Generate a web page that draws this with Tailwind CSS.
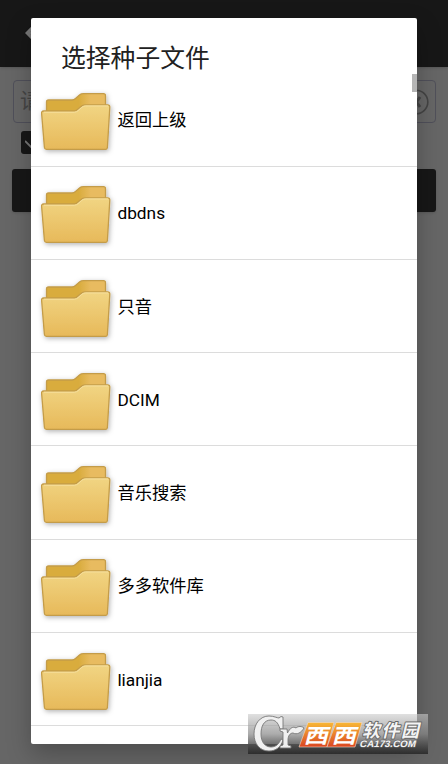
<!DOCTYPE html>
<html lang="zh">
<head>
<meta charset="UTF-8">
<title>选择种子文件</title>
<script src="https://cdn.jsdelivr.net/npm/@tailwindcss/browser@4"></script>
</head>
<body class="relative h-[764px] w-[448px] overflow-hidden bg-[#666] font-[Roboto,'Noto_Sans_CJK_SC',sans-serif]">

<!-- Page behind the dialog -->
<header class="flex h-[67px] items-center bg-[#171717] pl-[25px] shadow-sm">
    <svg class="mt-[-2px] h-3.5 w-4" viewBox="0 0 16 14" fill="none" stroke="#777" stroke-width="3"><path d="M8 1L2 7l6 6M2 7h14"/></svg>
</header>
<main class="px-3 pt-[13px]">
    <div class="ml-px flex h-[43px] w-[423px] items-center justify-between rounded border-[1.5px] border-[#50505a] pr-1.5 pl-1.5 text-[21px] text-[#454545]">
        <span>请输入</span>
        <svg class="h-[26px] w-[26px]" viewBox="0 0 26 26" fill="none" stroke="#444" stroke-width="1.6"><circle cx="13" cy="13" r="11.8"/><path d="M10 8l7 10M17 8l-7 10" stroke-width="3"/></svg>
    </div>
    <div class="mt-2 ml-[9px] flex h-[23px] w-[23px] items-center justify-center rounded-[3px] bg-[#171717]">
        <svg class="h-4 w-4" viewBox="0 0 16 16" fill="none" stroke="#777" stroke-width="1.8"><path d="M0 6l6 6 9-9"/></svg>
    </div>
    <div class="mt-[15px] h-[43px] rounded-[3px] bg-[#171717] shadow-sm"></div>
</main>

<!-- Dialog -->
<section class="absolute top-[18px] left-[31px] h-[726px] w-[386px] overflow-hidden rounded-[2px] bg-white" id="dialog">
    <h1 class="h-[55.3px] pt-[22px] pl-[30px] text-[24.8px] leading-[38px] text-[#212121]">选择种子文件</h1>
    <ul id="list"></ul>
</section>
<div class="pointer-events-none absolute top-[18px] left-[31px] h-[726px] w-[386px] rounded-[2px] shadow-[0_10px_24px_rgba(0,0,0,0.25)]"></div>
<div class="absolute top-[74px] left-[412px] h-[18px] w-[5px] bg-[#b5b5b5]"></div>

<!-- Site badge -->
<div class="absolute top-[714px] left-[248px] h-10 w-[180px] bg-linear-to-b from-[#ccc]/60 via-[#888]/70 to-[#282828]/90">
    <svg class="h-10 w-[180px]" viewBox="0 0 180 40">
        <defs>
            <linearGradient id="orange" x1="0" y1="0" x2="0" y2="1"><stop offset="0" stop-color="#f8b836"/><stop offset="1" stop-color="#da4520"/></linearGradient>
        </defs>
        <!-- C with a leaf -->
        <g fill="#f0f0f0" stroke="#777" stroke-width=".9" stroke-linejoin="round">
            <path d="M35 3V15H32C30 8 27 6 23 6C16 6 13 12 13 20C13 28 17 33 23 33C28 33 31 30 33 25L35 26C33 33 28 37 21 37C12 37 6 30 6 20C6 10 12 2 21 2C26 2 29 4 31 4L33 2.500Z"/>
            <path d="M32 15H39L39.500 19C42 14 45 12 48 14C50 12 54 12 56 14C53 19 49 21 45 19C42 19 40 22 40 26V31L43 32V34H32V32L35 31V18L32 17Z"/>
        </g>
        <g fill="url(#orange)" stroke="#f3dccb" stroke-width=".6">
            <path d="M60 8.500h26l-7 24.500H51z"/>
            <path d="M88 8.500h26l-7 24.500H79z"/>
        </g>
        <g fill="#fff" font-family="Noto Sans CJK SC, sans-serif" font-weight="700">
            <text transform="translate(55.500 28.800) skewX(-15) scale(1.22 1)" font-size="20">西</text>
            <text transform="translate(83.500 28.800) skewX(-15) scale(1.22 1)" font-size="20">西</text>
        </g>
        <g transform="skewX(-13)" fill="#f4f4f4" stroke="#666" paint-order="stroke" stroke-linejoin="round">
            <text x="119.500" y="23.500" font-size="18" font-family="Noto Sans CJK SC, sans-serif" font-weight="700" textLength="57" lengthAdjust="spacing" stroke-width="1.800">软件园</text>
            <text x="119" y="33.200" font-size="9.500" font-family="Liberation Sans, sans-serif" font-weight="700" textLength="56" lengthAdjust="spacingAndGlyphs" stroke-width="1.200">CA173.COM</text>
        </g>
    </svg>
</div>

<template id="row">
    <li class="flex h-[93.3px] items-center border-b-[1.5px] border-[#dcdcdc] text-[17.3px] text-black">
        <svg class="h-[93px] w-[86px] shrink-0" viewBox="0 0 86 93">
            <defs>
                <linearGradient id="front" x1="0" y1="0" x2="0" y2="1"><stop offset="0" stop-color="#f1d583"/><stop offset="1" stop-color="#e7b95a"/></linearGradient>
                <linearGradient id="back" x1="0" y1="0" x2="1" y2="0"><stop offset="0" stop-color="#d9ac3e"/><stop offset=".55" stop-color="#d9ac3e"/><stop offset=".75" stop-color="#e8bb60"/></linearGradient>
                <filter id="soft" x="-20%" y="-20%" width="140%" height="140%"><feDropShadow dx="1" dy="1.5" stdDeviation="2.4" flood-color="#000" flood-opacity=".3"/></filter>
            </defs>
            <g filter="url(#soft)" stroke="#c49c48" stroke-width="1.3" stroke-linejoin="round">
                <path d="M15.500 42V29q0-2 2-2H41q2 0 3.500-1.500L48.500 22q1.500-1.300 4-1.300H72.500q2 0 2 2V42z" fill="url(#back)"/>
                <path d="M12.500 38H43q2 0 3.500-1.500L50 33.500q1.800-1.700 4-1.700H76.700q2.300 0 2.100 2.500L76.400 74.500q-.1 1.900-2 1.900H15.500q-1.900 0-2.100-1.900L10.600 40.300q-.2-2.300 1.900-2.300z" fill="url(#front)"/>
            </g>
            <path d="M13 39.200H43.500q2 0 3.500-1.500L50.500 34.500q1.800-1.600 4-1.600H77" fill="none" stroke="#f6e0a0" stroke-width="1"/>
        </svg>
        <span class="pt-[3px] pl-[.4px]"></span>
    </li>
</template>

<script>
const folders = ['返回上级', 'dbdns', '只音', 'DCIM', '音乐搜索', '多多软件库', 'lianjia', ''];
const row = document.getElementById('row');
const list = document.getElementById('list');

folders.forEach(name => {
    const item = row.content.cloneNode(true);
    item.querySelector('span').textContent = name;
    list.appendChild(item);
});
</script>

</body>
</html>
